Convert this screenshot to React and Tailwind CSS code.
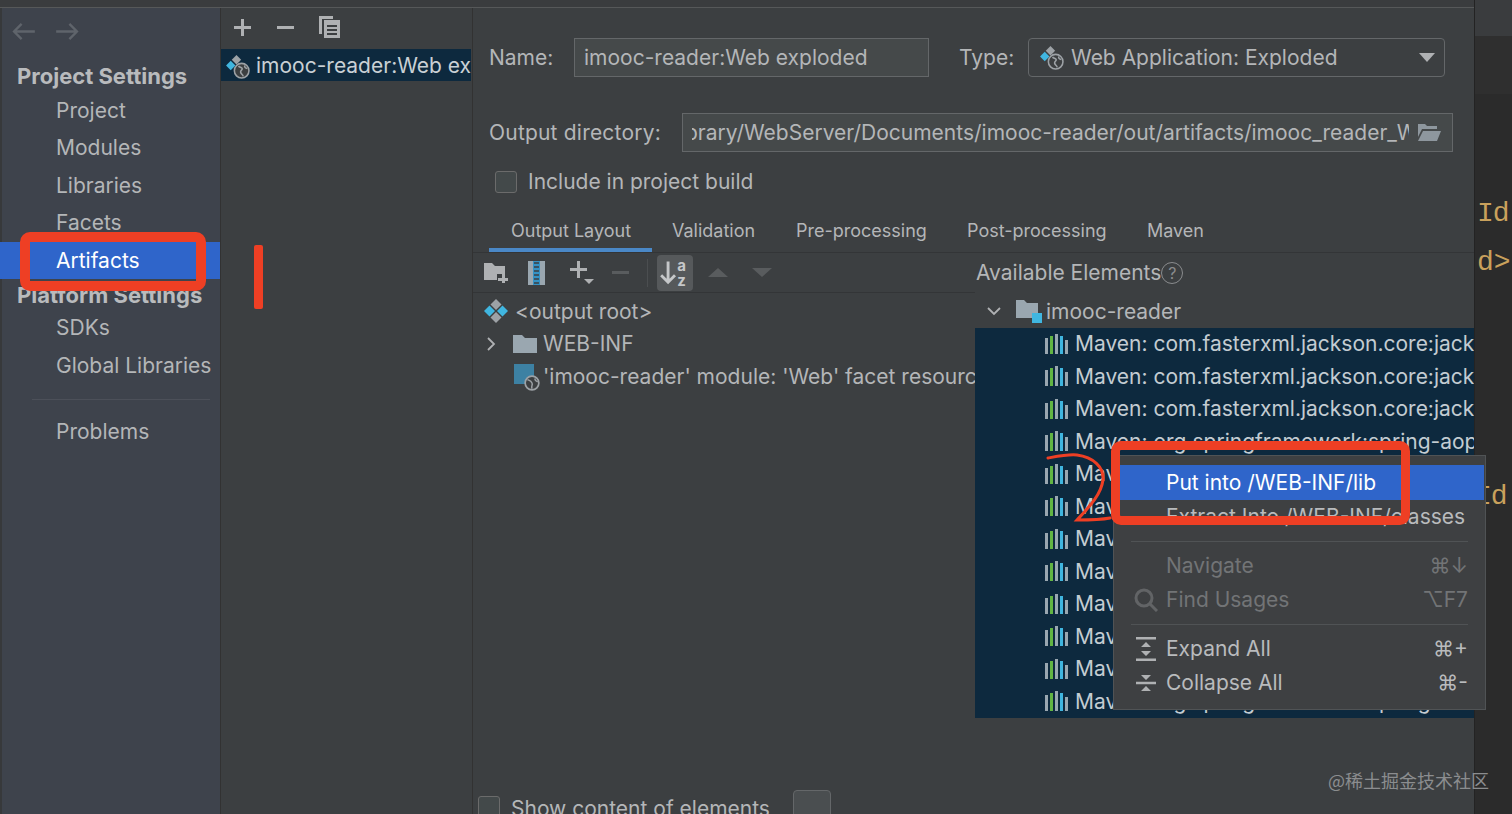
import React from 'react';

const sans = { fontFamily: 'Inter, "Liberation Sans", sans-serif' };

const ArtifactIcon = ({ className }) => (
  <svg viewBox="0 0 24 24" className={className}>
    <path d="M9 1l4.500 4.500L9 10 4.500 5.500z" fill="#9da2a6" transform="translate(2 0)" />
    <path d="M5.500 6.500L10 11l-4.500 4.500L1 11z" fill="#40b6e0" />
    <circle cx="16" cy="16" r="7" fill="#3c3f41" stroke="#9da2a6" strokeWidth="1.500" />
    <path d="M13 11.500c1 1.500 3 1 3.500 2.500s-2 1.500-1.500 3.500 2 2 2.500 4M19 11c-.5 1.500.5 2.500 2.500 3" stroke="#9da2a6" strokeWidth="1.500" fill="none" />
  </svg>
);

const RootIcon = () => (
  <svg viewBox="0 0 24 24" className="w-[24px] h-[24px] shrink-0">
    <path d="M12 0l5.500 5.500L12 11 6.500 5.500z" fill="#9da2a6" />
    <path d="M12 13l5.500 5.500L12 24l-5.500-5.500z" fill="#9da2a6" />
    <path d="M5.500 6.500L11 12l-5.500 5.500L0 12z" fill="#40b6e0" />
    <path d="M18.500 6.500L24 12l-5.500 5.500L13 12z" fill="#40b6e0" />
  </svg>
);

const MavenIcon = () => (
  <svg viewBox="0 0 23 20" className="w-[23px] h-[20px] shrink-0">
    <rect x="0" y="4" width="3" height="16" fill="#9aa7b0" />
    <rect x="5" y="2" width="3" height="18" fill="#62b543" />
    <rect x="10" y="0" width="3" height="20" fill="#9aa7b0" />
    <rect x="15" y="2" width="3" height="18" fill="#40b6e0" />
    <rect x="20" y="6" width="3" height="14" fill="#9aa7b0" />
  </svg>
);

const Caret = ({ open }) => (
  <svg viewBox="0 0 16 16" className="w-[16px] h-[16px]" fill="none" stroke="#afb1b3" strokeWidth="1.800">
    {open ? <path d="M2 5l6 6 6-6" /> : <path d="M5 2l6 6-6 6" />}
  </svg>
);

const Checkbox = ({ className = '' }) => (
  <span className={`block w-[22px] h-[22px] rounded-[3px] border border-[#6b6b6b] bg-[#43494a] shrink-0 ${className}`} />
);

const navItems = ['Project', 'Modules', 'Libraries', 'Facets'];
const tabs = [
  ['Output Layout', 'w-[163px] pl-[22px]'],
  ['Validation', 'w-[144px] pl-[20px]'],
  ['Pre-processing', 'w-[171px] pl-[0px]'],
  ['Post-processing', 'w-[180px] pl-[0px]'],
  ['Maven', 'w-[80px] pl-[0px]'],
];
const mavenRows = [
  'com.fasterxml.jackson.core:jackson-core',
  'com.fasterxml.jackson.core:jackson-databind',
  'com.fasterxml.jackson.core:jackson-annotations',
  'org.springframework:spring-aop:5.1.9',
  'org.springframework:spring-beans:5.1.9',
  'org.springframework:spring-context:5.1.9',
  'org.springframework:spring-core:5.1.9',
  'org.springframework:spring-expression:5.1.9',
  'org.springframework:spring-jcl:5.1.9',
  'org.springframework:spring-jdbc:5.1.9',
  'org.springframework:spring-tx:5.1.9',
  'org.springframework:spring-webmvc:5.1.9',
];

const Sidebar = () => (
  <div className="w-[221px] shrink-0 bg-[#3e434c] border-l-2 border-[#37393b] border-r border-r-[#323232] text-[21px] text-[#b4b6b8] flex flex-col">
    <div className="h-[53px] pb-[7px] pl-[10px] flex items-center gap-[21px]">
      <svg viewBox="0 0 24 18" className="w-[23px] h-[17px]" fill="none" stroke="#5f646b" strokeWidth="2.500"><path d="M24 9H2M10 1L2 9l8 8" /></svg>
      <svg viewBox="0 0 24 18" className="w-[23px] h-[17px]" fill="none" stroke="#5f646b" strokeWidth="2.500"><path d="M0 9h22M14 1l8 8-8 8" /></svg>
    </div>
    <div className="h-[30.500px] pl-[15px] flex items-center font-bold text-[22px] text-[#b9bbbd]">Project Settings</div>
    {navItems.map((item) => (
      <div key={item} className="h-[37.500px] pl-[54px] flex items-center">{item}</div>
    ))}
    <div className="h-[37.500px] -ml-[2px] pl-[56px] flex items-center bg-[#2f65ca] text-white">Artifacts</div>
    <div className="h-[30px] pt-[3px] pl-[15px] flex items-center font-bold text-[22px] text-[#b9bbbd]">Platform Settings</div>
    <div className="h-[37.500px] pl-[54px] flex items-center">SDKs</div>
    <div className="h-[37.500px] pl-[54px] flex items-center">Global Libraries</div>
    <div className="ml-[30px] mr-[10px] mt-[15px] border-t border-[#4c5059]" />
    <div className="h-[37.500px] mt-[13px] pl-[54px] flex items-center">Problems</div>
  </div>
);

const ArtifactList = () => (
  <div className="w-[252px] shrink-0 bg-[#3c3f41] border-r border-[#323232] flex flex-col text-[21px]">
    <div className="h-[38px] mb-[3px] pl-[13px] flex items-center gap-[26px]">
      <svg viewBox="0 0 17 17" className="w-[17px] h-[17px]" fill="none" stroke="#afb1b3" strokeWidth="3"><path d="M8.500 0v17M0 8.500h17" /></svg>
      <svg viewBox="0 0 17 17" className="w-[17px] h-[17px]" fill="none" stroke="#afb1b3" strokeWidth="3"><path d="M0 8.500h17" /></svg>
      <svg viewBox="0 0 21 22" className="w-[21px] h-[22px] ml-[-1px]" fill="#afb1b3">
        <path d="M0 0h14v3H3v15H0z" />
        <path d="M5 4h16v18H5zM8 9v2h10V9zm0 4v2h10v-2zm0 4v2h10v-2z" fillRule="evenodd" />
      </svg>
    </div>
    <div className="h-[32px] bg-[#0d293e] mr-[1px] pl-[4px] pt-[2px] flex items-center gap-[6px] whitespace-nowrap overflow-hidden text-[#c9d0d5]">
      <ArtifactIcon className="w-[25px] h-[25px] shrink-0" />
      <span>imooc-reader:Web ex</span>
    </div>
  </div>
);

const TreeLeft = () => (
  <div className="w-[502px] shrink-0 flex flex-col overflow-hidden">
    <div className="h-[40px] shrink-0 border-b border-[#333537] pl-[11px] flex items-center relative">
      <svg viewBox="0 0 24 20" className="w-[24px] h-[20px] shrink-0" fill="#afb1b3">
        <path d="M0 0h8l3 3h10v8h-8v6H0z" />
        <path d="M18 11h3v4h3v3h-3v2h-3v-2h-4v-3h4z" />
      </svg>
      <svg viewBox="0 0 17 24" className="w-[17px] h-[24px] ml-[20px] shrink-0">
        <rect width="17" height="24" fill="#9aa7b0" />
        <rect x="5" width="7" height="24" fill="#3592c4" />
        <path d="M6 2h5M6 6h5M6 10h5M6 14h5M6 18h5M6 22h5" stroke="#3c3f41" strokeWidth="1.500" />
      </svg>
      <span className="relative ml-[25px] w-[24px] h-[24px] shrink-0">
        <svg viewBox="0 0 17 17" className="w-[17px] h-[17px]" fill="none" stroke="#afb1b3" strokeWidth="3"><path d="M8.500 0v17M0 8.500h17" /></svg>
        <span className="absolute left-[14px] top-[18px] w-0 h-0 border-x-[5px] border-x-transparent border-t-[5px] border-t-[#afb1b3]" />
      </span>
      <svg viewBox="0 0 17 17" className="w-[17px] h-[17px] ml-[18px] shrink-0" fill="none" stroke="#595c5e" strokeWidth="3"><path d="M0 8.500h17" /></svg>
      <span className="ml-[18px] w-px h-[28px] bg-[#4b4e50]" />
      <span className="ml-[9px] w-[36px] h-[36px] rounded-[4px] bg-[#56595b] flex items-center justify-center shrink-0">
        <svg viewBox="0 0 26 24" className="w-[30px] h-[28px]">
          <path d="M7 2v17M1 14l6 6 6-6" fill="none" stroke="#c5c7c9" strokeWidth="2.500" />
          <text x="15" y="10" fontSize="13" fontWeight="700" fill="#c5c7c9" style={sans}>a</text>
          <text x="15" y="23" fontSize="13" fontWeight="700" fill="#c5c7c9" style={sans}>z</text>
        </svg>
      </span>
      <span className="ml-[15px] w-0 h-0 border-x-[10px] border-x-transparent border-b-[9px] border-b-[#595c5e]" />
      <span className="ml-[24px] w-0 h-0 border-x-[10px] border-x-transparent border-t-[9px] border-t-[#595c5e]" />
    </div>
    <div className="pt-[2px] text-[21px] text-[#b4b6b8] whitespace-nowrap">
      <div className="h-[32.500px] pl-[11px] flex items-center gap-[7px]"><RootIcon /><span>&lt;output root&gt;</span></div>
      <div className="h-[32.500px] pl-[10px] flex items-center">
        <Caret />
        <svg viewBox="0 0 24 18" className="w-[24px] h-[18px] ml-[14px] shrink-0" fill="#9aa7b0"><path d="M0 0h9l3 3h12v15H0z" /></svg>
        <span className="ml-[6px]">WEB-INF</span>
      </div>
      <div className="h-[32.500px] pl-[41px] flex items-center">
        <span className="relative w-[24px] h-[24px] shrink-0">
          <span className="absolute left-0 top-0 w-[20px] h-[20px] bg-[#3d81a3]" />
          <svg viewBox="0 0 14 14" className="absolute right-[-2px] bottom-[-3px] w-[16px] h-[16px]">
            <circle cx="7" cy="7" r="6" fill="#3c3f41" stroke="#9da2a6" strokeWidth="1.500" />
            <path d="M3 4c2 1 3 1 4 3s-1 2 0 5M10 3c-1 1 0 2 2 3" stroke="#9da2a6" strokeWidth="1.300" fill="none" />
          </svg>
        </span>
        <span className="ml-[5px]">'imooc-reader' module: 'Web' facet resources</span>
      </div>
    </div>
  </div>
);

const TreeRight = () => (
  <div className="flex-1 min-w-0 flex flex-col text-[21px] whitespace-nowrap overflow-hidden">
    <div className="h-[42px] pb-[2px] shrink-0 flex items-center text-[#b4b6b8]">
      <span className="ml-[1px]">Available Elements</span>
      <span className="w-[22px] h-[22px] rounded-full border border-[#8a8c8e] text-[#8a8c8e] text-[16px] flex items-center justify-center">?</span>
    </div>
    <div className="h-[32.500px] shrink-0 pl-[11px] flex items-center text-[#b4b6b8]">
      <Caret open />
      <span className="relative ml-[14px] w-[26px] h-[24px] shrink-0">
        <svg viewBox="0 0 22 18" className="w-[22px] h-[18px] mt-[1px]" fill="#9aa7b0"><path d="M0 0h8l3 3h11v15H0z" /></svg>
        <span className="absolute right-0 bottom-0 w-[10px] h-[10px] bg-[#40b6e0]" />
      </span>
      <span className="ml-[4px]">imooc-reader</span>
    </div>
    <div className="bg-[#0d293e] text-[#c3ccd2]">
      {mavenRows.map((row) => (
        <div key={row} className="h-[32.500px] pl-[70px] flex items-center gap-[7px]">
          <MavenIcon />
          <span>Maven: {row}</span>
        </div>
      ))}
    </div>
  </div>
);

const MainPanel = () => (
  <div className="flex-1 min-w-0 bg-[#3c3f41] flex flex-col text-[21px] text-[#b4b6b8]">
    <div className="h-[39px] shrink-0 mt-[30px] pl-[16px] flex items-center">
      <span className="w-[85px]">Name:</span>
      <div className="w-[355px] h-[39px] border border-[#646769] bg-[#45494a] pl-[9px] flex items-center">imooc-reader:Web exploded</div>
      <span className="ml-[30px] w-[69px]">Type:</span>
      <div className="w-[417px] h-[39px] rounded-[4px] border border-[#646769] pl-[10px] pr-[9px] flex items-center">
        <ArtifactIcon className="w-[25px] h-[25px] shrink-0" />
        <span className="ml-[7px]">Web Application: Exploded</span>
        <span className="ml-auto w-0 h-0 border-x-[8px] border-x-transparent border-t-[9px] border-t-[#afb1b3]" />
      </div>
    </div>
    <div className="mt-[36px] h-[39px] shrink-0 pl-[16px] flex items-center">
      <span className="w-[193px] whitespace-nowrap tracking-[0.2px]">Output directory:</span>
      <div className="w-[771px] h-[39px] border border-[#646769] bg-[#45494a] pl-[9px] pr-[11px] flex items-center">
        <div className="flex-1 min-w-0 overflow-hidden whitespace-nowrap">
          <span className="block -ml-[7px]">brary/WebServer/Documents/imooc-reader/out/artifacts/imooc_reader_Web_exploded</span>
        </div>
        <svg viewBox="0 0 24 17" className="w-[24px] h-[17px] ml-[8px] shrink-0" fill="#8e979e"><path d="M1 0h7l2 2h10v3H5l-4 8z" /><path d="M6 7h18l-4 10H1z" /></svg>
      </div>
    </div>
    <div className="mt-[14px] h-[32px] shrink-0 pl-[22px] flex items-center gap-[11px]">
      <Checkbox />
      <span>Include in project build</span>
    </div>
    <div className="mt-[16px] h-[39px] shrink-0 pl-[16px] flex border-b border-[#333537] text-[18px] text-[#b4b6b8]">
      {tabs.map(([label, cls], i) => (
        <div key={label} className={`${cls} h-[38px] flex items-center whitespace-nowrap ${i === 0 ? 'border-b-[4px] border-[#4a88c7] pb-[2px]' : 'pb-[6px]'}`}>{label}</div>
      ))}
    </div>
    <div className="flex h-[520px] shrink-0">
      <TreeLeft />
      <TreeRight />
    </div>
    <div className="mt-[17px] pl-[5px] flex items-start gap-[11px] whitespace-nowrap">
      <Checkbox className="mt-[6px]" />
      <span className="mt-[8px] leading-[22px]">Show content of elements</span>
      <span className="ml-[12px] w-[38px] h-[38px] rounded-[4px] border border-[#646769] bg-[#4a4e50] shrink-0" />
    </div>
  </div>
);

const ContextMenu = () => (
  <div className="absolute left-[1113px] top-[455px] w-[373px] h-[255px] bg-[#3e4042] border border-[#505355] pt-[9px] text-[21px] text-[#b9bbbd]">
    <div className="h-[35px] bg-[#2f65ca] text-white pl-[52px] flex items-center mr-[1px]">Put into /WEB-INF/lib</div>
    <div className="h-[34px] pl-[52px] flex items-center">Extract Into /WEB-INF/classes</div>
    <div className="mx-[17px] mt-[7px] border-t border-[#505355]" />
    <div className="h-[34px] mt-[7px] pl-[52px] pr-[17px] flex items-center justify-between text-[#727476]">
      <span>Navigate</span><span>⌘↓</span>
    </div>
    <div className="h-[34px] pl-[20px] pr-[17px] flex items-center text-[#727476]">
      <svg viewBox="0 0 24 24" className="w-[24px] h-[24px]" fill="none" stroke="#626466" strokeWidth="3"><circle cx="10" cy="10" r="8" /><path d="M16 16l7 7" /></svg>
      <span className="ml-[8px]">Find Usages</span><span className="ml-auto">⌥F7</span>
    </div>
    <div className="mx-[17px] mt-[7px] border-t border-[#505355]" />
    <div className="h-[34px] mt-[7px] pl-[22px] pr-[17px] flex items-center">
      <svg viewBox="0 0 20 24" className="w-[20px] h-[24px]" fill="#afb1b3"><path d="M0 0h20v2.500H0zM0 21.500h20V24H0zM10 5l5 5H5zM10 19l-5-5h10z" /></svg>
      <span className="ml-[10px]">Expand All</span><span className="ml-auto">⌘+</span>
    </div>
    <div className="h-[34px] pl-[22px] pr-[17px] flex items-center">
      <svg viewBox="0 0 20 22" className="w-[20px] h-[22px]" fill="#afb1b3"><path d="M0 9.800h20v2.400H0zM10 8L5 3h10zM10 14l5 5H5z" /></svg>
      <span className="ml-[10px]">Collapse All</span><span className="ml-auto">⌘-</span>
    </div>
  </div>
);

const EditorStrip = () => (
  <div className="flex-1 min-w-0 bg-[#2b2b2b] border-l border-[#232323] flex flex-col overflow-hidden">
    <div className="h-[36px] bg-[#3a3c3e]" />
    <div className="h-[58px] bg-[#2f2f2f]" />
    <div className="pl-[2px] mt-[102px] text-[28px] leading-[36px] tracking-[-1px] font-['Liberation_Mono',monospace] text-[#c9a15c] whitespace-nowrap">Id:</div>
    <div className="pl-[2px] mt-[13px] text-[28px] leading-[36px] font-['Liberation_Mono',monospace] text-[#c9a15c] whitespace-nowrap">d&gt;</div>
    <div className="pl-[0px] mt-[198px] text-[28px] leading-[36px] tracking-[-1px] font-['Liberation_Mono',monospace] text-[#c9a15c] whitespace-nowrap">Id:</div>
  </div>
);

export default function App() {
  return (
    <div className="relative w-[1512px] h-[814px] overflow-hidden flex bg-[#3c3f41]" style={sans}>
      <div className="w-[1474px] shrink-0 flex flex-col">
        <div className="h-[8px] shrink-0 bg-[#3a3c3e] border-b border-[#565859]" />
        <div className="flex flex-1 min-h-0">
          <Sidebar />
          <ArtifactList />
          <MainPanel />
        </div>
      </div>
      <EditorStrip />

      <ContextMenu />

      {/* hand drawn annotations on top of the screenshot */}
      <div className="absolute left-[20px] top-[232px] w-[186px] h-[59px] rounded-[10px] border-[10px] border-[#ee3f24]" />
      <div className="absolute left-[254px] top-[245px] w-[9px] h-[64px] rounded-[2px] bg-[#ee3f24]" />
      <div className="absolute left-[1111px] top-[441px] w-[299px] h-[84px] rounded-[10px] border-[9px] border-[#ee3f24]" />
      <svg viewBox="0 0 70 74" className="absolute left-[1045px] top-[453px] w-[70px] h-[74px]" fill="none" stroke="#ee3f24" strokeWidth="3" strokeLinecap="round">
        <path d="M3 5C14 3 24 1 32 2 48 4 59 14 58 27 56 42 44 54 32 67 44 67 55 67 65 65" />
      </svg>
      <div className="absolute left-[1328px] top-[768px] text-[18px] leading-[24px] text-[#8b8d8f] whitespace-nowrap font-['Noto_Sans_CJK_SC',sans-serif]">@稀土掘金技术社区</div>
    </div>
  );
}
